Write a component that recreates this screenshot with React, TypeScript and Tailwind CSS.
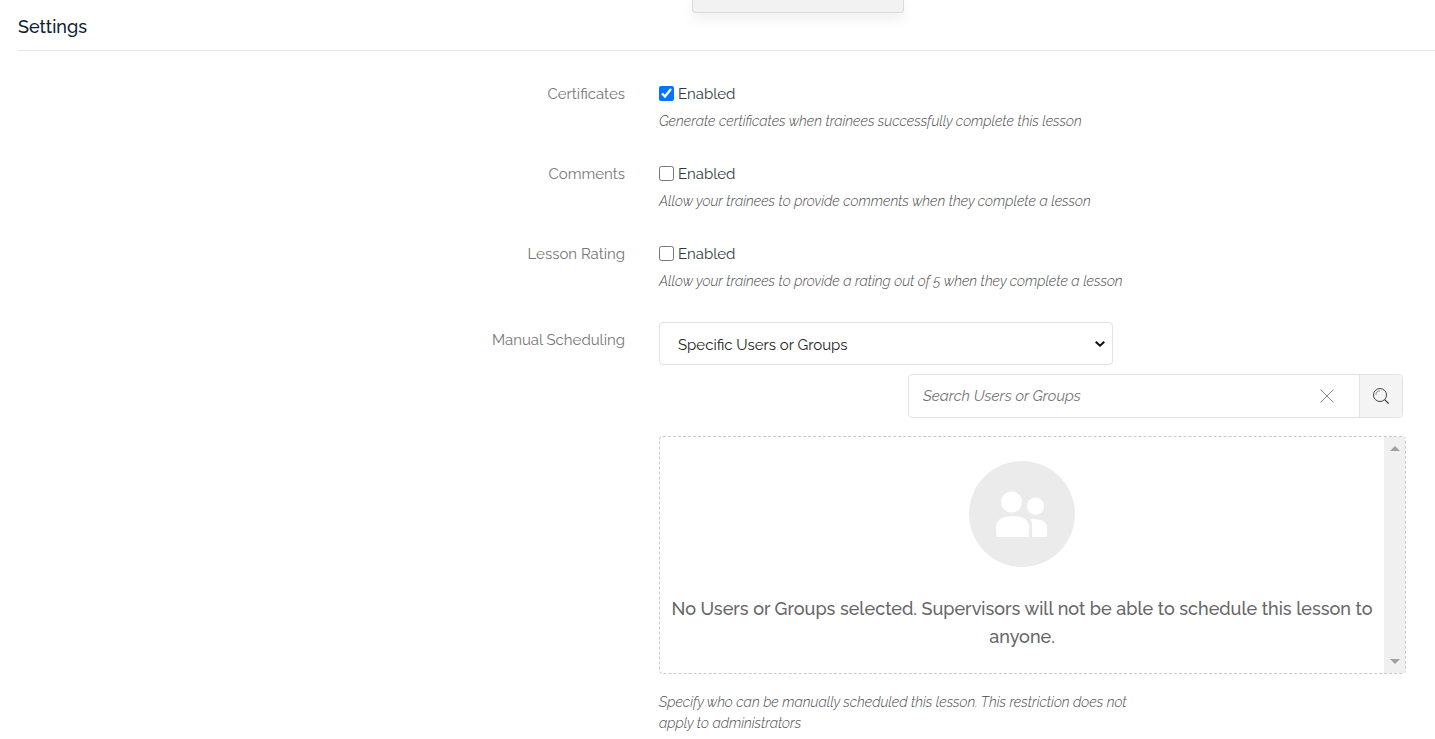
import React, { useState } from "react";

type ToggleRowProps = {
  id: string;
  label: string;
  hint: string;
  defaultChecked?: boolean;
};

const rowGrid = "grid grid-cols-[607fr_776fr] gap-x-[34px]";
const labelText = "text-right text-[15px] leading-7 text-[#777777]";
const hintText = "text-sm leading-[21px] font-light italic text-[#484848]";

function ToggleRow({ id, label, hint, defaultChecked }: ToggleRowProps) {
  return (
    <div className={rowGrid} role="group" aria-labelledby={`${id}-label`}>
      <span id={`${id}-label`} className={labelText}>
        {label}
      </span>
      <div>
        <div className="flex h-7 items-center gap-1">
          <input
            id={id}
            type="checkbox"
            defaultChecked={defaultChecked}
            aria-describedby={`${id}-hint`}
            className="mb-0.5 size-[15px] accent-[#0075ff]"
          />
          <label htmlFor={id} className="text-[15px] leading-7 text-[#333b42]">
            Enabled
          </label>
        </div>
        <p id={`${id}-hint`} className={`mt-[3px] ${hintText}`}>
          {hint}
        </p>
      </div>
    </div>
  );
}

function ClearIcon() {
  return (
    <svg viewBox="0 0 14 14" className="size-3.5" fill="none" stroke="#8c8c8c" strokeWidth="1" aria-hidden="true">
      <path d="M.5.5l13 13M13.5.5l-13 13" />
    </svg>
  );
}

function SearchIcon() {
  return (
    <svg viewBox="0 0 16 16" className="size-4" fill="none" stroke="#444444" strokeWidth="1" aria-hidden="true">
      <circle cx="7" cy="7" r="6.5" />
      <path d="M11.6 11.6l4 4" strokeWidth="1.3" />
      <path d="M2.9 7A4.1 4.1 0 0 1 7 2.9" stroke="#777777" strokeWidth=".8" />
    </svg>
  );
}

function PeopleBadge() {
  return (
    <svg viewBox="0 0 106 106" className="size-[106px]" aria-hidden="true">
      <circle cx="53" cy="53" r="53" fill="#ebebeb" />
      <g fill="#ffffff">
        <circle cx="42.5" cy="41" r="10.5" />
        <circle cx="66.5" cy="45.2" r="8.6" />
        <path d="M27.6 76L27 68C26.6 59.6 32 55.2 43.5 55.2S60.6 59.6 60.2 68L59.7 76Z" />
        <path d="M61.3 58C72 57.4 78.6 60.4 78.2 68L77.8 76H63L63.2 68C63.3 63.4 62.8 60.6 61.3 58Z" />
      </g>
    </svg>
  );
}

export default function App() {
  const [query, setQuery] = useState("");

  return (
    <main className="relative bg-white pl-[18px] font-['Raleway','Lato',sans-serif]">
      <div className="absolute top-0 left-[692px] h-[13px] w-[212px] rounded-b border border-t-0 border-[#dadada] bg-[#f2f2f2] shadow-[0_6px_14px_rgba(0,0,0,0.07)]" />

      <h1 className="border-b border-[#e5e5e5] pt-[13px] pb-[9px] text-lg leading-7 font-medium text-[#0d2233]">
        Settings
      </h1>

      <form className="pt-[29px] pb-2" onSubmit={(event) => event.preventDefault()}>
        <div className="flex flex-col gap-7">
          <ToggleRow
            id="certificates"
            label="Certificates"
            hint="Generate certificates when trainees successfully complete this lesson"
            defaultChecked
          />
          <ToggleRow
            id="comments"
            label="Comments"
            hint="Allow your trainees to provide comments when they complete a lesson"
          />
          <ToggleRow
            id="rating"
            label="Lesson Rating"
            hint="Allow your trainees to provide a rating out of 5 when they complete a lesson"
          />
        </div>

        <div className={`mt-[30px] ${rowGrid}`}>
          <label htmlFor="scheduling" className={`pt-1 ${labelText}`}>
            Manual Scheduling
          </label>
          <div className="pr-[29px]">
            <div className="grid w-full max-w-[454px] items-center">
              <select
                id="scheduling"
                defaultValue="specific"
                className="col-start-1 row-start-1 h-[43px] w-full appearance-none rounded border border-[#e2e2e2] bg-white px-[18px] pt-1 text-[15px] text-[#222222]"
              >
                <option value="specific">Specific Users or Groups</option>
                <option value="all">All Users</option>
              </select>
              <svg
                viewBox="0 0 10 6"
                className="pointer-events-none col-start-1 row-start-1 mr-2 h-1.5 w-2.5 justify-self-end"
                fill="none"
                stroke="#111111"
                strokeWidth="2"
                aria-hidden="true"
              >
                <path d="M.7.7L5 4.7 9.3.7" />
              </svg>
            </div>

            <div className="mt-[9px] mr-[3px] ml-auto flex h-11 max-w-[495px] overflow-hidden rounded border border-[#e2e2e2]">
              <input
                type="text"
                aria-label="Search Users or Groups"
                placeholder="Search Users or Groups"
                value={query}
                onChange={(event) => setQuery(event.target.value)}
                className="min-w-0 flex-1 px-3.5 text-[15px] italic text-[#333333] outline-none placeholder:text-[#757575]"
              />
              <button
                type="button"
                aria-label="Clear"
                onClick={() => setQuery("")}
                className="flex w-[65px] items-center justify-center"
              >
                <ClearIcon />
              </button>
              <button
                type="submit"
                aria-label="Search"
                className="flex w-[43px] items-center justify-center border-l border-[#e2e2e2] bg-[#f4f4f4]"
              >
                <SearchIcon />
              </button>
            </div>

            <div className="mt-[18px] flex rounded-sm border border-dashed border-[#c8c8c8]">
              <div className="flex flex-1 flex-col items-center px-2 pt-6 pb-[22px]">
                <PeopleBadge />
                <p className="mt-7 text-center text-lg leading-7 font-medium text-[#666666]">
                  No Users or Groups selected. Supervisors will not be able to schedule this lesson to anyone.
                </p>
              </div>
              <div className="flex w-[21px] flex-col items-center justify-between bg-[#f0f0f0] py-[9px]" aria-hidden="true">
                <svg viewBox="0 0 10 5" className="h-[5px] w-2.5" fill="#a0a0a0">
                  <path d="M5 0l5 5H0z" />
                </svg>
                <svg viewBox="0 0 10 5" className="h-[5px] w-2.5" fill="#a0a0a0">
                  <path d="M0 0h10L5 5z" />
                </svg>
              </div>
            </div>

            <p className={`mt-[18px] max-w-[480px] ${hintText}`}>
              Specify who can be manually scheduled this lesson. This restriction does not apply to administrators
            </p>
          </div>
        </div>
      </form>
    </main>
  );
}
